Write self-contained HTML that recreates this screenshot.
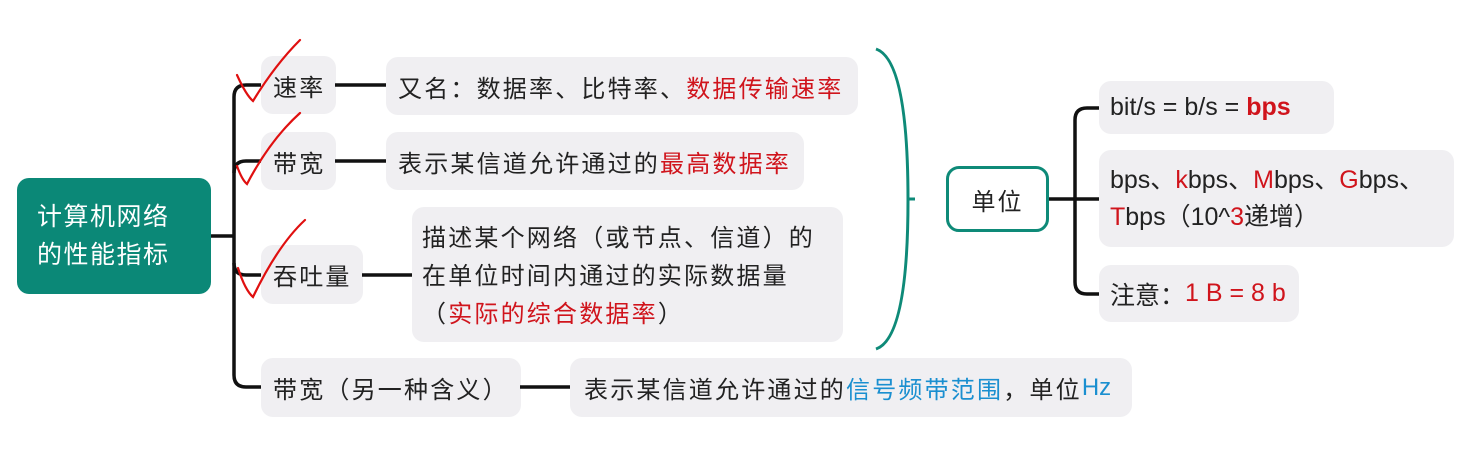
<!DOCTYPE html>
<html><head><meta charset="utf-8"><style>
html,body{margin:0;padding:0;background:#fff;}
body{width:1475px;height:457px;position:relative;overflow:hidden;font-family:"Liberation Sans","Noto Sans CJK SC",sans-serif;color:#222;}
.b{position:absolute;background:#f0eff2;border-radius:12px;font-size:24px;letter-spacing:2.2px;box-sizing:border-box;display:flex;align-items:center;white-space:nowrap;}
.m{position:absolute;background:#f0eff2;border-radius:12px;font-size:24px;letter-spacing:2.2px;box-sizing:border-box;white-space:nowrap;}
.r{color:#d0141c;}
.u{color:#1a8fd0;}
.root{position:absolute;left:17px;top:178px;width:194px;height:116px;background:#0b8877;border-radius:12px;color:#fff;font-size:25px;letter-spacing:1.5px;line-height:38px;box-sizing:border-box;padding:20px 0 0 20px;}
.unit{position:absolute;left:946px;top:166px;width:103px;height:66px;border:3px solid #0e8a78;border-radius:13px;box-sizing:border-box;font-size:24px;display:flex;align-items:center;justify-content:center;letter-spacing:2px;background:#fff;}
svg{position:absolute;left:0;top:0;z-index:2;}
</style></head><body>
<svg width="1475" height="457">
<g stroke="#111" stroke-width="3.5" fill="none">
<line x1="211" y1="236" x2="234" y2="236"/>
<path d="M261 85 H246 Q234 85 234 97 V375 Q234 387 246 387 H261"/>
<path d="M234 173 Q234 161 246 161 H261" />
<path d="M234 263 Q234 275 246 275 H261"/>
<line x1="335" y1="85" x2="386" y2="85"/>
<line x1="335" y1="161" x2="386" y2="161"/>
<line x1="362" y1="275" x2="412" y2="275"/>
<line x1="520" y1="387" x2="570" y2="387"/>
<line x1="1049" y1="199" x2="1099" y2="199"/>
<path d="M1099 108 H1087 Q1075 108 1075 120 V282 Q1075 294 1087 294 H1099"/>
</g>
<g stroke="#0e8a78" stroke-width="3" fill="none">
<path d="M876 49 Q908 60 908 200 Q908 338 876 349"/>
<line x1="908" y1="199" x2="915" y2="199"/>
</g>
<g stroke="#e01010" stroke-width="2.2" fill="none" stroke-linecap="round">
<path d="M237 75 Q246 95 253 101 Q275 65 300 40"/>
<path d="M237 166 Q242 180 247 184 Q270 140 300 113"/>
<path d="M238 268 Q245 290 253 297 Q278 245 305 220"/>
</g>
</svg>
<div class="root">计算机网络<br>的性能指标</div>
<div class="b" style="left:261px;top:56px;width:75px;height:58px;padding-left:12px;">速率</div>
<div class="b" style="left:261px;top:132px;width:75px;height:58px;padding-left:12px;">带宽</div>
<div class="b" style="left:261px;top:245px;width:102px;height:59px;padding-left:12px;">吞吐量</div>
<div class="b" style="left:261px;top:358px;width:260px;height:59px;padding-left:12px;">带宽（另一种含义）</div>
<div class="b" style="left:386px;top:57px;width:472px;height:58px;padding-left:12px;">又名：数据率、比特率、<span class="r">数据传输速率</span></div>
<div class="b" style="left:386px;top:132px;width:418px;height:58px;padding-left:12px;">表示某信道允许通过的<span class="r">最高数据率</span></div>
<div class="m" style="left:412px;top:207px;width:431px;height:135px;padding:13px 0 0 10px;line-height:38px;">描述某个网络（或节点、信道）的<br>在单位时间内通过的实际数据量<br>（<span class="r">实际的综合数据率</span>）</div>
<div class="b" style="left:570px;top:358px;width:562px;height:59px;padding-left:14px;">表示某信道允许通过的<span class="u">信号频带范围</span>，单位 <span class="u" style="letter-spacing:0">Hz</span></div>
<div class="unit">单位</div>
<div class="b" style="left:1099px;top:81px;width:235px;height:53px;padding-left:11px;letter-spacing:0;font-size:25px;">bit/s = b/s = <b class="r" style="margin-left:7px">bps</b></div>
<div class="m" style="left:1099px;top:150px;width:355px;height:97px;padding:12px 0 0 11px;letter-spacing:0;line-height:37px;font-size:25px;">bps、<span class="r">k</span>bps、<span class="r">M</span>bps、<span class="r">G</span>bps、<br><span class="r">T</span>bps（10^<span class="r">3</span>递增）</div>
<div class="b" style="left:1099px;top:265px;width:200px;height:57px;padding-left:11px;letter-spacing:0;font-size:25px;">注意：<span class="r">1 B = 8 b</span></div>
</body></html>
